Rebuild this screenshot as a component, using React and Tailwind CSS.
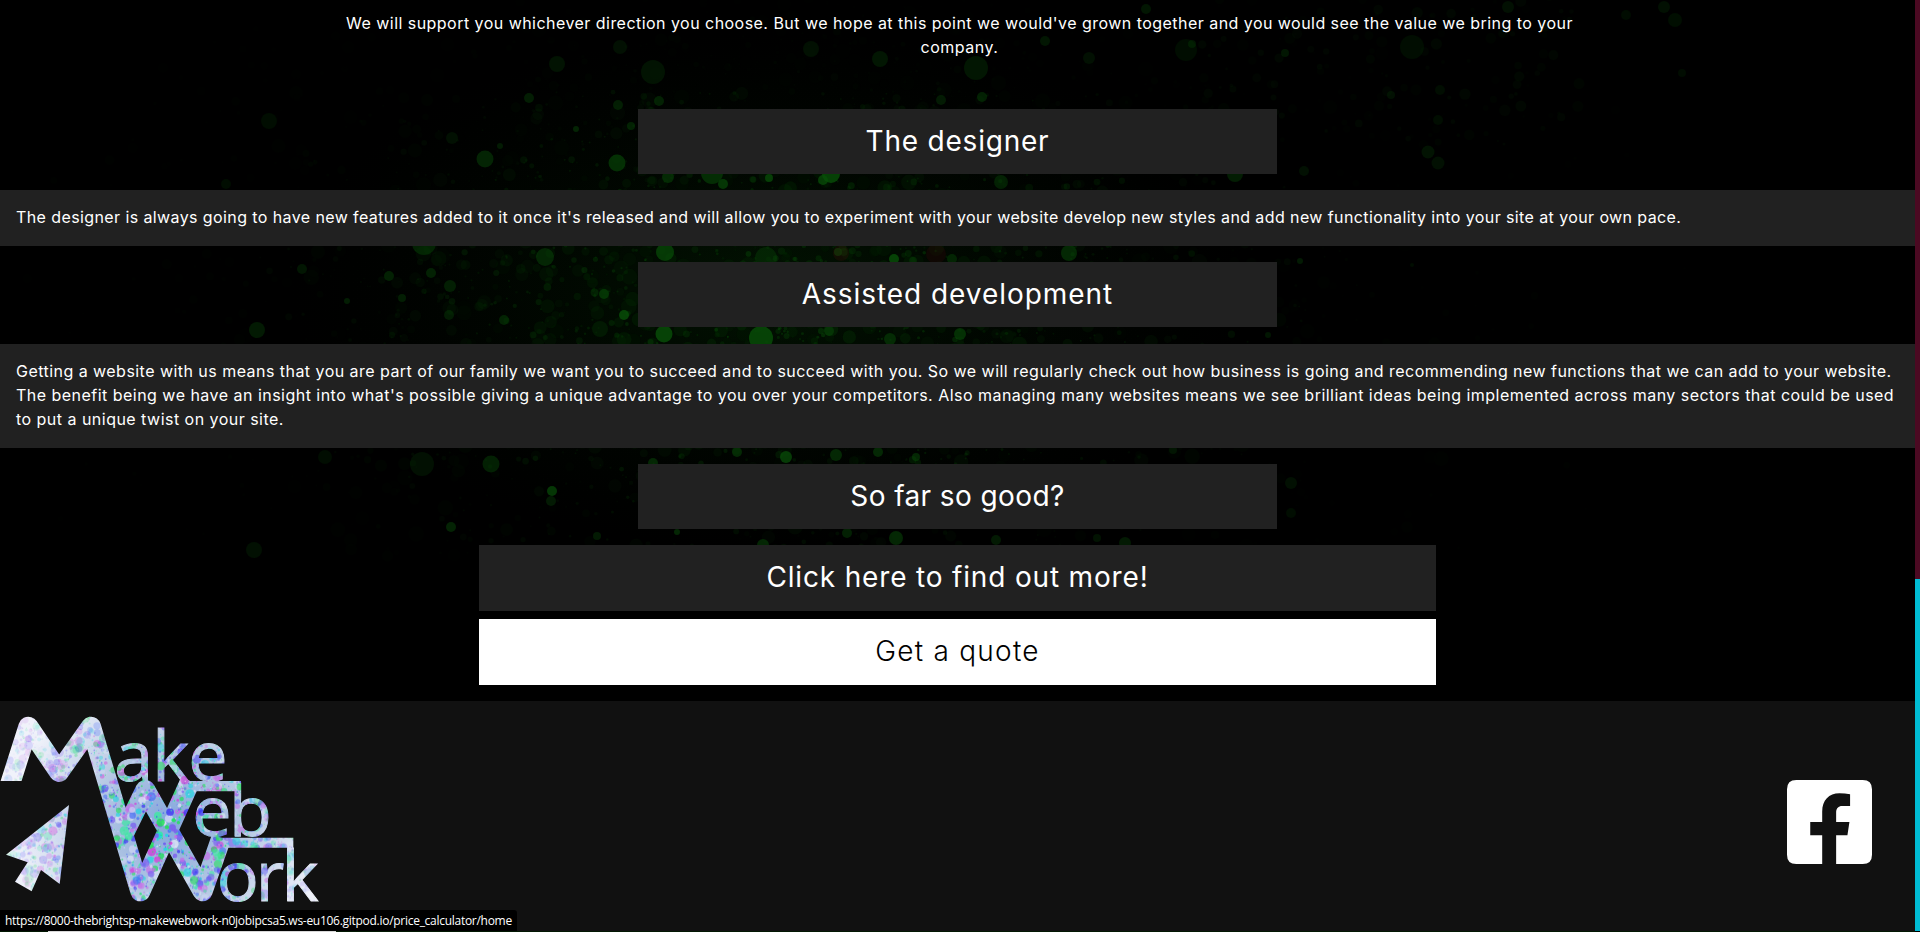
import React from "react";

function seeded(seed) {
  let s = seed;
  return () => {
    s = (s * 1664525 + 1013904223) % 4294967296;
    return s / 4294967296;
  };
}

// x, y, radius, brightness
const DROPS = [
  [557,64,8,.3],[653,72,12,.3],[620,47,7,.25],[269,121,8,.2],[485,159,8.5,.55],[617,163,8.5,.7],[529,98,5,.45],
  [452,138,6,.25],[631,126,4,.5],[576,129,3,.55],[618,105,5,.45],[659,101,5,.5],[500,146,3,.4],[424,243,12,.5],
  [545,257,9,.55],[665,252,9,.85],[712,173,11,.65],[668,177,6,.6],[389,276,5,.5],[431,273,5,.5],[450,286,6,.45],
  [402,298,4,.45],[604,294,5,.7],[624,315,5,1],[302,269,5,.35],[449,315,5,.4],[347,301,3,.45],[504,320,5,.5],
  [257,330,8,.4],[600,329,8,.3],[664,334,8.5,1],[761,338,12,1],[829,331,5,.6],[422,464,12,.25],[491,464,8.5,.5],
  [325,457,7,.2],[552,491,5,.85],[551,501,5,.4],[451,527,5,.55],[254,550,8,.25],[653,463,5,.6],[786,457,6,.9],
  [737,452,5,.6],[836,455,6,.6],[847,533,5,.5],[763,545,6,.6],[677,532,3,.6],[597,536,4,.4],[880,59,8,.35],
  [976,68,12,.35],[982,97,5,.5],[941,100,5,.4],[1186,50,11,.2],[1412,47,12,.2],[1304,171,5,.25],[1069,253,8,.6],
  [1300,261,3,.4],[952,259,5,.5],[894,259,5,1],[1001,182,7,.45],[831,174,9,1],[823,180,5,.9],[1235,174,8,.45],
  [1146,9,5,.35],[811,49,8,.25],[960,334,6,.7],[890,339,6,.6],[1291,483,6,.25],[1291,513,5,.2],[896,538,7,.6],
  [1125,543,6,.4],[878,452,5,.6],[1508,7,6,.25],[1664,7,6,.25],[1675,20,7,.22],[1428,152,6.5,.3],[1438,163,6.5,.25],
  [1438,120,5,.2],[766,258,11,.4],[723,184,5,.8],[769,178,4,.9],[838,252,4,.9],[1045,41,5,.35],[1192,44,4,.35],
  [1285,53,4,.35],[1089,58,6,.25],[1412,265,2,.2],[1391,95,4,.25],[1440,90,5,.2],[226,184,5,.2],[1626,15,5,.18],
  [1682,73,4,.18],[1268,335,3,.35],[1173,450,4,.3],[916,457,4,.6],[996,540,5,.4],[1097,538,4,.3],
];

const rnd = seeded(77);
const gauss = () => rnd() + rnd() + rnd() + rnd() - 2;
const MIST = Array.from({ length: 4200 }, () => {
  const x = 790 + gauss() * 500;
  const y = 290 + gauss() * 290;
  const d = Math.hypot((x - 800) / 640, (y - 310) / 350);
  const r = Math.pow(rnd(), 3) * 7 + 1;
  const o = Math.max(0.03, (1 - d) * (r > 4 ? 0.25 : 0.5)) * (0.2 + rnd() * 0.8);
  return [x, y, r, o * (y < 92 ? 0.5 : 1)];
}).filter(([, y]) => y < 556);
const OUTER = Array.from({ length: 140 }, () => [1180 + rnd() * 400, rnd() * 150 - 4, 1 + rnd() * 5, 0.02 + rnd() * 0.07]);

function Backdrop() {
  return (
    <svg className="absolute inset-0 h-full w-full" aria-hidden="true">
      <defs>
        <radialGradient id="glow">
          <stop offset="0" stopColor="#053005" stopOpacity=".4" />
          <stop offset="1" stopColor="#001000" stopOpacity="0" />
        </radialGradient>
      </defs>
      <ellipse cx="770" cy="290" rx="480" ry="260" fill="url(#glow)" />
      {[...MIST, ...OUTER].map(([x, y, r, o], i) => (
        <circle key={i} cx={x} cy={y} r={r} fill="#085008" opacity={o} />
      ))}
      {DROPS.map(([x, y, r, o], i) => (
        <circle key={i} cx={x} cy={y} r={r} fill="#085008" opacity={o * 0.8} />
      ))}
      <circle cx="841" cy="253" r="8" fill="#2a0f08" opacity=".4" />
      <circle cx="936" cy="254" r="10" fill="#2a0508" opacity=".35" />
    </svg>
  );
}

const lr = seeded(1234);
const PAINT = ["#22e05a", "#3f35f5", "#d63ad8", "#1fd6e0", "#4a6cf5", "#7a5cf0", "#3ce8a0", "#c86ae8", "#cfd6f5", "#dfe6f5"];
const SPOTS = Array.from({ length: 5200 }, () => {
  const x = lr() * 960;
  const y = 80 + lr() * 560;
  const d = Math.hypot((x - 500) / 420, (y - 420) / 400);
  return [x, y, 2 + Math.pow(lr(), 4) * 12, PAINT[Math.floor(lr() * PAINT.length)], Math.max(0.14, 0.9 - d * 0.7)];
});

function Logo() {
  return (
    <svg className="h-[201px] w-[320px] shrink-0 overflow-visible" viewBox="0 66 960 603" role="img" aria-label="Make Web Work">
      <defs>
        <radialGradient id="wash" gradientUnits="userSpaceOnUse" cx="510" cy="400" r="470">
          <stop offset="0" stopColor="#83a6dc" />
          <stop offset=".5" stopColor="#b8cae4" />
          <stop offset="1" stopColor="#f0f2fa" />
        </radialGradient>
        <pattern id="paint" patternUnits="userSpaceOnUse" x="0" y="0" width="960" height="680">
          <rect width="960" height="680" fill="url(#wash)" />
          {SPOTS.map(([x, y, r, c, o], i) => (
            <circle key={i} cx={x} cy={y} r={r} fill={c} opacity={o} />
          ))}
        </pattern>
        <clipPath id="foot">
          <path d="M0 60H960V660H90V273H0Z" />
        </clipPath>
      </defs>
      <g fill="none" stroke="url(#paint)" strokeWidth="60" strokeLinejoin="round" clipPath="url(#foot)">
        <path d="M23 305 L85 110 L177 246 L273 110 L421 604 L571 273" />
        <path d="M372 430 L436 300 L608 604 L664 443" />
      </g>
      <path fill="url(#paint)" d="M541 273H723V440H705V304H535ZM635 443H880V633H861V473H625Z" />
      <path fill="url(#paint)" d="M207 345L179 582L123 540L95 604L45 575L83 517L18 494Z" />
      <g fill="url(#paint)" stroke="url(#paint)" strokeWidth="3" className="font-['Open_Sans',sans-serif] text-[210px]">
        <text x="343 457 565" y="272">ake</text>
        <text x="577 687" y="438">eb</text>
        <text x="650 767 845" y="633">ork</text>
      </g>
    </svg>
  );
}

function Facebook() {
  return (
    <svg className="h-[84px] w-[85px]" viewBox="142 120 256 252" preserveAspectRatio="none" role="img" aria-label="Facebook">
      <path
        fill="#fff"
        d="M170 120H370Q398 120 398 148V344Q398 372 370 372H290V286H324L330 246H290V217C290 205 297 198 308 198H332V163C322 161 311 160 300 160C268 160 248 181 248 215V246H212V286H248V372H170Q142 372 142 344V148Q142 120 170 120Z"
      />
    </svg>
  );
}

function Heading({ className, children }) {
  return (
    <h2 className="flex h-[65px] w-[639px] shrink-0 items-center justify-center bg-[#212121] pb-0.5 text-[28px] leading-none">
      <span className={className}>{children}</span>
    </h2>
  );
}

function Line({ className, children }) {
  return <span className={`block whitespace-nowrap ${className}`}>{children}</span>;
}

export default function App() {
  return (
    <div className="relative flex h-[932px] w-[1920px] overflow-hidden bg-black font-['Inter',sans-serif] text-base leading-6 text-white">
      <Backdrop />
      <div className="relative flex w-[1915px] flex-col">
        <main className="flex h-[701px] flex-col items-center pt-[11px]">
          <p className="h-[98px] pl-[4px] text-center">
            <Line className="tracking-[0.46px]">We will support you whichever direction you choose. But we hope at this point we would've grown together and you would see the value we bring to your</Line>
            <Line className="tracking-[0.5px]">company.</Line>
          </p>
          <Heading className="tracking-[0.78px]">The designer</Heading>
          <p className="mt-4 h-14 w-full bg-[#212121] px-4 py-[15px]">
            <Line className="tracking-[0.4px]">The designer is always going to have new features added to it once it's released and will allow you to experiment with your website develop new styles and add new functionality into your site at your own pace.</Line>
          </p>
          <div className="mt-4 flex"><Heading className="tracking-[0.95px]">Assisted development</Heading></div>
          <p className="mt-[17px] h-[104px] w-full bg-[#212121] px-4 py-[15px]">
            <Line className="tracking-[0.46px]">Getting a website with us means that you are part of our family we want you to succeed and to succeed with you. So we will regularly check out how business is going and recommending new functions that we can add to your website.</Line>
            <Line className="tracking-[0.475px]">The benefit being we have an insight into what's possible giving a unique advantage to you over your competitors. Also managing many websites means we see brilliant ideas being implemented across many sectors that could be used</Line>
            <Line className="tracking-[0.475px]">to put a unique twist on your site.</Line>
          </p>
          <div className="mt-4 flex"><Heading className="tracking-[0.4px]">So far so good?</Heading></div>
          <a className="mt-4 flex h-[66px] w-[957px] items-center justify-center bg-[#212121] pb-0.5 text-[28px]"><span className="tracking-[0.83px]">Click here to find out more!</span></a>
          <a className="mt-2 flex h-[66px] w-[957px] items-center justify-center bg-white pb-0.5 text-[28px] font-light text-black"><span className="tracking-[1.25px]">Get a quote</span></a>
        </main>
        <footer className="flex h-[230px] items-center justify-between bg-[#111] pr-[43px]">
          <div className="flex h-full items-start pt-[11px]"><Logo /></div>
          <div className="pt-[12px]"><Facebook /></div>
        </footer>
        <div className="flex h-px bg-[#031803] pl-12"><div className="h-px w-[288px] bg-[#d8d8d8]" /></div>
      </div>
      <div className="relative flex h-[931px] w-[5px] flex-col bg-[#4b0922]">
        <div className="mt-[579px] flex-1 bg-[#00bcd4]" />
      </div>
      <div className="absolute bottom-px left-0 flex h-[21px] w-[517px] items-center rounded-tr-[3px] bg-black pl-[5px] font-['Open_Sans',sans-serif] text-[12px]">
        <span className="whitespace-nowrap tracking-[-0.28px]">https://8000-thebrightsp-makewebwork-n0jobipcsa5.ws-eu106.gitpod.io/price_calculator/home</span>
      </div>
    </div>
  );
}
